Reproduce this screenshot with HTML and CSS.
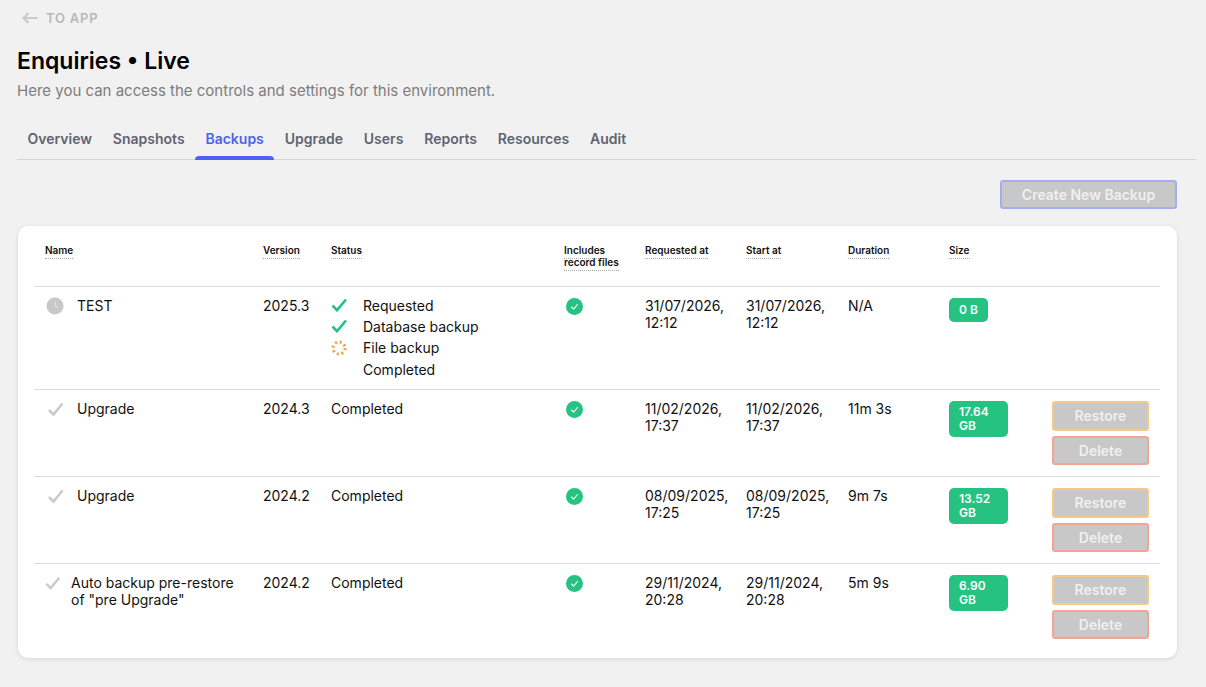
FILE: index.html

```html
<!DOCTYPE html>
<html lang="en">
<head>
  <meta charset="UTF-8" />
  <title>Enquiries • Live</title>
  <link rel="stylesheet" href="styles.css">
</head>
<body>
  <a class="back-link">
    <svg width="16" height="12" viewBox="0 0 16 12"><path d="M6.500 1 1.500 6l5 5M1.500 6h14" fill="none" stroke="#cbcbcb" stroke-width="2.200"/></svg>
    TO APP
  </a>
  <h1>Enquiries • Live</h1>
  <p class="subtitle">Here you can access the controls and settings for this environment.</p>

  <div class="tabs">
    <span class="tab">Overview</span>
    <span class="tab">Snapshots</span>
    <span class="tab active">Backups</span>
    <span class="tab">Upgrade</span>
    <span class="tab">Users</span>
    <span class="tab">Reports</span>
    <span class="tab">Resources</span>
    <span class="tab">Audit</span>
  </div>

  <div class="toolbar">
    <button class="btn btn-create">Create New Backup</button>
  </div>

  <div class="card">
    <table class="backups">
      <colgroup>
        <col class="col-name"><col class="col-version"><col class="col-status"><col class="col-files">
        <col class="col-req"><col class="col-start"><col class="col-dur"><col class="col-size"><col class="col-actions">
      </colgroup>
      <thead>
        <tr>
          <th><span class="hint">Name</span></th>
          <th><span class="hint">Version</span></th>
          <th><span class="hint">Status</span></th>
          <th><span class="hint">Includes record files</span></th>
          <th><span class="hint">Requested at</span></th>
          <th><span class="hint">Start at</span></th>
          <th><span class="hint">Duration</span></th>
          <th><span class="hint">Size</span></th>
          <th></th>
        </tr>
      </thead>
      <tbody>
        <tr>
          <td>
            <div class="name-cell">
              <svg class="state-icon" width="19" height="18" viewBox="0 0 19 18"><circle cx="10" cy="9" r="8.500" fill="#c8c8c8"/><path d="M10.500 5V9.500l2.500 1.300" fill="none" stroke="#e4e4e4" stroke-width="1"/></svg>
              TEST
            </div>
          </td>
          <td>2025.3</td>
          <td>
            <div class="step">
              <svg class="step-icon" width="16" height="14" viewBox="0 0 16 14"><path d="M1.500 7.500 6 12.200 15 1.500" fill="none" stroke="#26c281" stroke-width="2.600"/></svg>
              Requested
            </div>
            <div class="step">
              <svg class="step-icon" width="16" height="14" viewBox="0 0 16 14"><path d="M1.500 7.500 6 12.200 15 1.500" fill="none" stroke="#26c281" stroke-width="2.600"/></svg>
              Database backup
            </div>
            <div class="step">
              <svg class="step-icon" width="16" height="16" viewBox="0 0 16 16"><circle cx="8" cy="8" r="6" fill="none" stroke="#f0a63c" stroke-width="3" stroke-dasharray="2 2.700"/></svg>
              File backup
            </div>
            <div class="step"><span class="step-icon"></span>Completed</div>
          </td>
          <td><svg class="ok" width="17" height="17" viewBox="0 0 18 18"><circle cx="9" cy="9" r="9" fill="#26c281"/><path d="M5.500 9.300 8 11.700 12.500 6.500" fill="none" stroke="#e8f8f1" stroke-width="1.300"/></svg></td>
          <td>31/07/2026, 12:12</td>
          <td>31/07/2026, 12:12</td>
          <td>N/A</td>
          <td><span class="size size-small">0 B</span></td>
          <td></td>
        </tr>
        <tr>
          <td>
            <div class="name-cell">
              <svg class="state-icon" width="19" height="18" viewBox="0 0 19 18"><path d="M4 10 8.500 14.500 17.500 3.500" fill="none" stroke="#cbcbcb" stroke-width="2.600"/></svg>
              Upgrade
            </div>
          </td>
          <td>2024.3</td>
          <td>Completed</td>
          <td><svg class="ok" width="17" height="17" viewBox="0 0 18 18"><circle cx="9" cy="9" r="9" fill="#26c281"/><path d="M5.500 9.300 8 11.700 12.500 6.500" fill="none" stroke="#e8f8f1" stroke-width="1.300"/></svg></td>
          <td>11/02/2026, 17:37</td>
          <td>11/02/2026, 17:37</td>
          <td>11m 3s</td>
          <td><span class="size">17.64 GB</span></td>
          <td>
            <div class="actions">
              <button class="btn btn-restore">Restore</button>
              <button class="btn btn-delete">Delete</button>
            </div>
          </td>
        </tr>
        <tr>
          <td>
            <div class="name-cell">
              <svg class="state-icon" width="19" height="18" viewBox="0 0 19 18"><path d="M4 10 8.500 14.500 17.500 3.500" fill="none" stroke="#cbcbcb" stroke-width="2.600"/></svg>
              Upgrade
            </div>
          </td>
          <td>2024.2</td>
          <td>Completed</td>
          <td><svg class="ok" width="17" height="17" viewBox="0 0 18 18"><circle cx="9" cy="9" r="9" fill="#26c281"/><path d="M5.500 9.300 8 11.700 12.500 6.500" fill="none" stroke="#e8f8f1" stroke-width="1.300"/></svg></td>
          <td>08/09/2025, 17:25</td>
          <td>08/09/2025, 17:25</td>
          <td>9m 7s</td>
          <td><span class="size">13.52 GB</span></td>
          <td>
            <div class="actions">
              <button class="btn btn-restore">Restore</button>
              <button class="btn btn-delete">Delete</button>
            </div>
          </td>
        </tr>
        <tr>
          <td>
            <div class="name-cell name-cell-long">
              <svg class="state-icon" width="18" height="18" viewBox="0 0 19 18"><path d="M1.500 10 6 14.500 15 3.500" fill="none" stroke="#cbcbcb" stroke-width="2.600"/></svg>
              <span>Auto backup pre-restore of "pre Upgrade"</span>
            </div>
          </td>
          <td>2024.2</td>
          <td>Completed</td>
          <td><svg class="ok" width="17" height="17" viewBox="0 0 18 18"><circle cx="9" cy="9" r="9" fill="#26c281"/><path d="M5.500 9.300 8 11.700 12.500 6.500" fill="none" stroke="#e8f8f1" stroke-width="1.300"/></svg></td>
          <td>29/11/2024, 20:28</td>
          <td>29/11/2024, 20:28</td>
          <td>5m 9s</td>
          <td><span class="size">6.90 GB</span></td>
          <td>
            <div class="actions">
              <button class="btn btn-restore">Restore</button>
              <button class="btn btn-delete">Delete</button>
            </div>
          </td>
        </tr>
      </tbody>
    </table>
  </div>
</body>
</html>
```

FILE: styles.css

```css
body {
  font-family: 'Inter', 'Liberation Sans', sans-serif;
  background-color: #f1f1f1;
  color: #111;
  margin: 0;
  padding: 10px 29px 28px 17px;
  font-size: 14px;
}
.back-link {
  display: flex;
  align-items: center;
  gap: 8px;
  margin-left: 5px;
  height: 16px;
  color: #b9b9b9;
  font-size: 13px;
  font-weight: 600;
  letter-spacing: 0.8px;
}
h1 {
  margin: 19px 0 0;
  font-size: 23px;
  line-height: 32px;
  font-weight: 600;
  color: #000;
}
.subtitle {
  margin: 3px 0 0;
  font-size: 15px;
  line-height: 22px;
  color: #7d7d7d;
}
.tabs {
  display: flex;
  gap: 0.85px;
  margin: 18px -20px 0 0;
  padding-left: 0.5px;
  border-bottom: 1px solid #d8d8d8;
}
.tab {
  position: relative;
  padding: 10px 10px 11px;
  line-height: 18px;
  font-weight: 600;
  color: #5f6472;
}
.tab.active {
  color: #4c63f0;
}
.tab.active::after {
  content: "";
  position: absolute;
  left: 0;
  right: 0;
  bottom: -1px;
  height: 4px;
  background-color: #4c63f0;
  border-radius: 4px 4px 0 0;
}
.toolbar {
  display: flex;
  justify-content: flex-end;
  margin-top: 20px;
}
.btn {
  font-family: inherit;
  font-size: 14px;
  font-weight: 600;
  color: #f0f0f0;
  background-color: #c8c8c8;
  border: 2px solid;
  border-radius: 3px;
  padding: 0;
}
.btn-create {
  width: 177px;
  height: 29px;
  border-color: #a5adf2;
}
.btn-restore {
  border-color: #f5c985;
  height: 30px;
}
.btn-delete {
  border-color: #f5a493;
  height: 29px;
}
.card {
  margin: 17px 0 0 1px;
  padding: 0 17px 8px 16px;
  background-color: #fff;
  border-radius: 10px;
  box-shadow: 0 1px 4px rgba(0, 0, 0, 0.12);
}
.backups {
  width: 1126px;
  table-layout: fixed;
  border-collapse: collapse;
}
.col-name { width: 218px; }
.col-version { width: 68px; }
.col-status { width: 233px; }
.col-files { width: 81px; }
.col-req { width: 101px; }
.col-start { width: 102px; }
.col-dur { width: 101px; }
.col-size { width: 103px; }
.col-actions { width: 119px; }
.backups th {
  height: 60px;
  padding: 18px 11px 0;
  text-align: left;
  vertical-align: top;
  box-sizing: border-box;
  font-size: 10px;
  line-height: 12px;
  font-weight: 600;
}
.hint {
  border-bottom: 1px dotted #aaa;
  box-decoration-break: clone;
  -webkit-box-decoration-break: clone;
  padding-bottom: 2px;
}
.backups td {
  padding: 10px 11px;
  vertical-align: top;
  border-top: 1px solid #dcdcdc;
  line-height: 17px;
}
.name-cell {
  display: flex;
  gap: 13px;
}
.name-cell-long {
  gap: 8px;
  margin-right: -6px;
}
.state-icon {
  flex-shrink: 0;
}
.step {
  display: flex;
  align-items: center;
  gap: 16px;
  height: 21.330px;
}
.step:first-child {
  margin-top: -2px;
}
.step:last-child {
  margin-bottom: -1px;
}
.step-icon {
  width: 16px;
  flex-shrink: 0;
}
.ok {
  display: block;
  margin: 1px 0 0 2px;
}
.size {
  display: block;
  box-sizing: border-box;
  width: 59px;
  margin-top: 1px;
  padding: 4px 10px;
  background-color: #26c281;
  color: #fff;
  border-radius: 5px;
  font-size: 12px;
  line-height: 14px;
  font-weight: 600;
}
.size-small {
  width: 39px;
  padding: 5px 10px;
}
.actions {
  display: flex;
  flex-direction: column;
  gap: 5px;
  margin: 1px 0 1px;
}
.actions .btn {
  width: 97px;
}
```
